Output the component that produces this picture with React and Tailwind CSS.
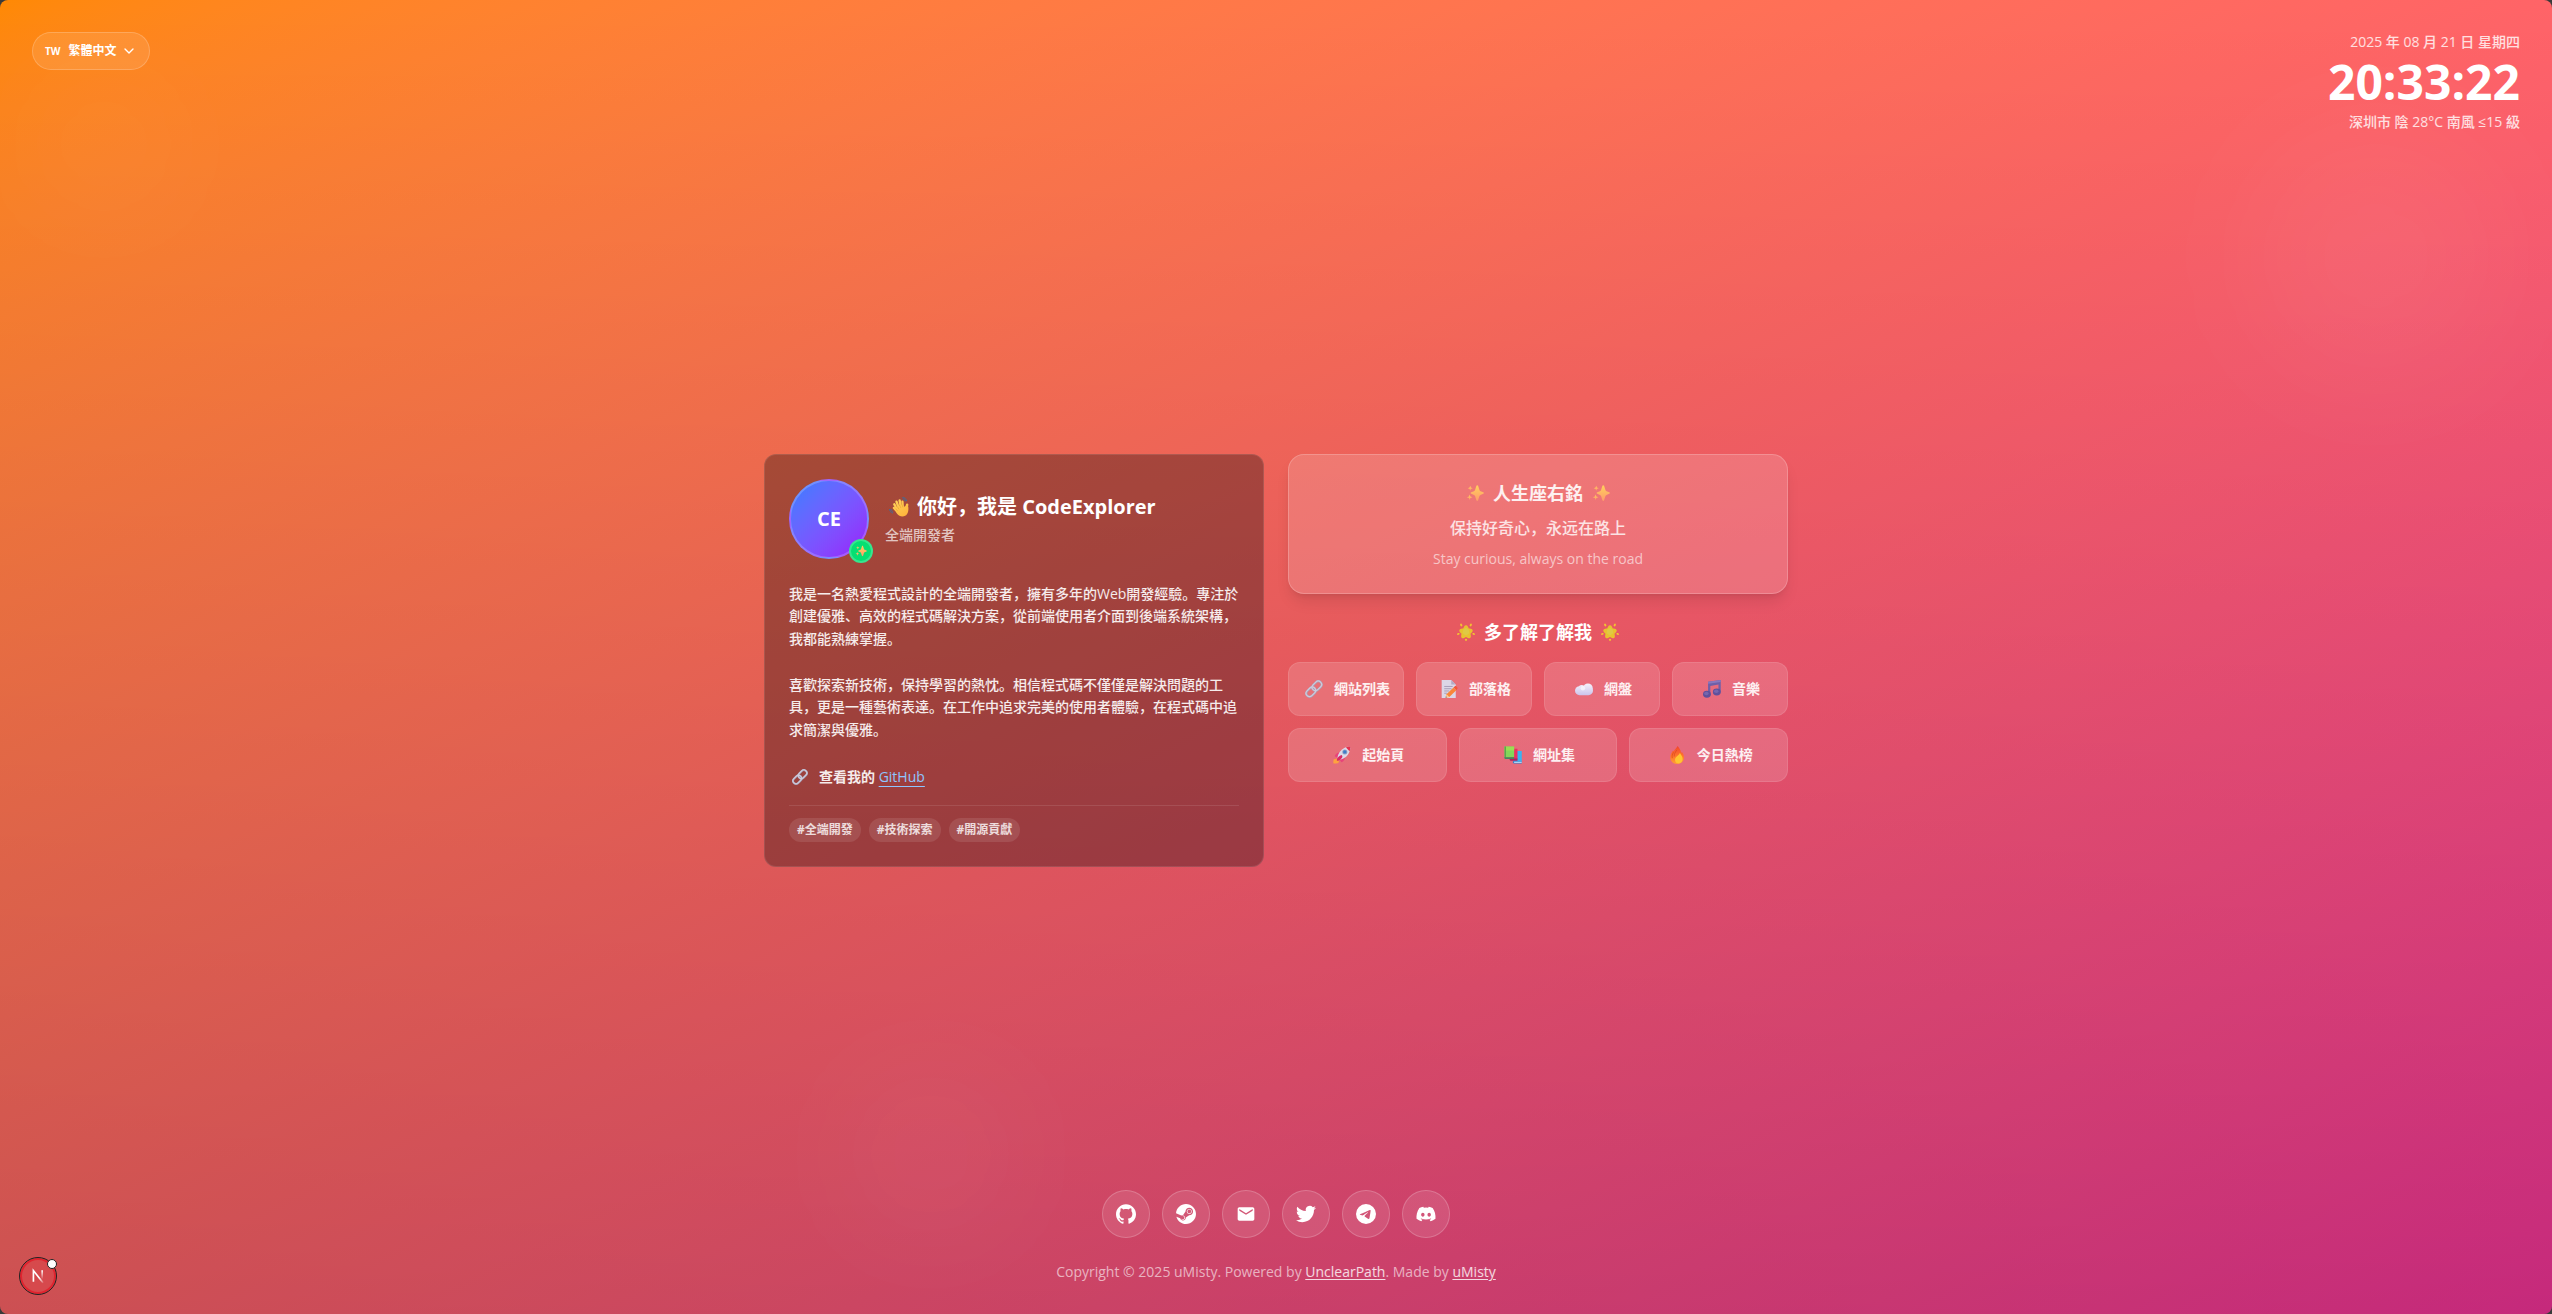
import React, { useId } from "react";
import { SiGithub, SiSteam, SiTelegram } from "react-icons/si";
import { MdEmail } from "react-icons/md";
import { ChevronDown } from "lucide-react";

const Emoji = ({ size = "size-[18px]", children }) => (
  <svg viewBox="0 0 32 32" className={`${size} shrink-0`} aria-hidden="true">
    {children}
  </svg>
);

function Sparkles({ size }) {
  const id = useId();
  return (
    <Emoji size={size}>
      <defs>
        <linearGradient id={id} x1="0" y1="0" x2="0" y2="1">
          <stop offset="0" stopColor="#ffd15c" />
          <stop offset="1" stopColor="#ff9a6b" />
        </linearGradient>
      </defs>
      <g fill={`url(#${id})`}>
        <path d="M18.5 3.2c.6-1.6 2.4-1.6 3 0l2.4 7.6c.3.9 1 1.6 1.9 1.9l4.8 1.8c1.5.6 1.5 2.4 0 3l-4.8 1.9c-.9.3-1.6 1-1.9 1.9l-2.4 7.6c-.6 1.6-2.4 1.6-3 0l-2.4-7.6c-.3-.9-1-1.6-1.9-1.9l-4.8-1.9c-1.5-.6-1.5-2.4 0-3l4.8-1.8c.9-.3 1.6-1 1.9-1.9z" />
        <path d="M6.5 18.5l1.3 3.7 3.7 1.3-3.7 1.3-1.3 3.7-1.3-3.7L1.500 23.500l3.700-1.300z" />
        <path d="M7.500 3l1.200 3.300L12 7.500 8.700 8.700 7.500 12 6.300 8.700 3 7.500l3.300-1.200z" />
      </g>
    </Emoji>
  );
}

function Wave() {
  const id = useId();
  return (
    <Emoji size="size-5">
      <defs>
        <linearGradient id={id} gradientUnits="userSpaceOnUse" x1="8" y1="6" x2="26" y2="30">
          <stop offset="0" stopColor="#ffd25a" />
          <stop offset="1" stopColor="#ffb43c" />
        </linearGradient>
      </defs>
      <g fill="none" stroke={`url(#${id})`} strokeLinecap="round">
        <path d="M12 18.500L8.500 11.500" strokeWidth="3.800" />
        <path d="M15 16L12 7.500" strokeWidth="3.800" />
        <path d="M18.500 14.500L17 5.500" strokeWidth="3.800" />
        <path d="M22 14L21.500 7.500" strokeWidth="3.600" />
        <path d="M13 23L8 17.500" strokeWidth="3.800" />
        <path d="M27 20L29 12.500" strokeWidth="4" />
      </g>
      <path
        d="M10.500 18c-.6 6 3.500 13 11 13 7 0 9-5 9.500-10.500.2-3.500 0-6-2-8l-4 3-4.500-3.500z"
        fill={`url(#${id})`}
      />
      <g fill="none" stroke="#e39a2e" strokeWidth=".8" strokeLinecap="round">
        <path d="M13.500 15.500l2 3.500M17 13l1.800 4M21 12.500l1 3.500M11 19l2.500 3" />
      </g>
      <g fill="none" stroke="#3d6f9e" strokeWidth="1.6" strokeLinecap="round">
        <path d="M22 1c3.500 0 5.500 2 6 5M22.500 3.500c2 .2 3 1.200 3.200 3M1 20c.5 3 2 4.800 4.500 5.500M3.500 20c.3 1.800 1.200 2.800 2.500 3.300" />
      </g>
    </Emoji>
  );
}

function LinkEmoji({ size }) {
  return (
    <Emoji size={size}>
      <g transform="rotate(-45 16 16)" fill="none">
        <rect x="-1" y="10" width="19" height="12" rx="6" stroke="#a9a2b8" strokeWidth="4" />
        <rect x="14" y="10" width="19" height="12" rx="6" stroke="#a9a2b8" strokeWidth="4" />
        <rect x="-1" y="9.6" width="19" height="12" rx="6" stroke="#cfcadb" strokeWidth="2.2" />
        <rect x="14" y="9.6" width="19" height="12" rx="6" stroke="#cfcadb" strokeWidth="2.2" />
      </g>
    </Emoji>
  );
}

function Star() {
  return (
    <Emoji>
      <path
        d="M16 5.500c.9 0 1.500.5 1.900 1.300l2 4.100 4.600.7c2 .3 2.600 2.300 1.200 3.700l-3.300 3.300.8 4.600c.3 2-1.400 3.100-3.100 2.300L16 23.300l-4.100 2.200c-1.700.8-3.400-.3-3.100-2.300l.8-4.600-3.300-3.300c-1.400-1.400-.8-3.400 1.200-3.700l4.600-.7 2-4.100c.4-.8 1-1.300 1.900-1.300z"
        fill="#e9c12f"
        stroke="#e9c12f"
        strokeWidth="3"
        strokeLinejoin="round"
      />
      <path d="M11 12l5-4 5 4 1 6-6 4-6-4z" fill="#e0c944" />
      <g fill="#f2c232">
        <ellipse cx="7.500" cy="3.500" rx="1.800" ry="2.600" transform="rotate(-30 7.500 3.500)" />
        <ellipse cx="24.500" cy="3.500" rx="1.800" ry="2.600" transform="rotate(30 24.500 3.500)" />
        <ellipse cx="2.500" cy="19.500" rx="2.400" ry="1.700" transform="rotate(-20 2.500 19.500)" />
        <ellipse cx="29.500" cy="19.500" rx="2.400" ry="1.700" transform="rotate(20 29.500 19.500)" />
        <ellipse cx="16" cy="29.800" rx="2" ry="2" />
      </g>
    </Emoji>
  );
}

function Memo() {
  return (
    <Emoji>
      <path d="M3 0h17l8 8v24H3z" fill="#dcd6e6" />
      <path d="M20 0l8 8h-8z" fill="#b3aac4" />
      <path d="M7.500 11.500h15M7.500 15.500h13M7.500 19.500h9M7.500 23.500h5" stroke="#9a91ad" strokeWidth="1.400" />
      <path d="M11.500 25.500L24 13.500l5 4.500-12.500 12-6 1.200z" fill="#f9873a" />
      <path d="M24 13.500l2-2c1-1 2.300-.8 3.200 0l1.300 1.300c1 1 1 2.300 0 3.200L29 18z" fill="#f4553a" />
      <path d="M11.500 25.500l5 4.500-6.500 1.500z" fill="#f8cf9a" />
      <path d="M10.500 29l1.800 1.700-2.500.8z" fill="#5b4a5c" />
    </Emoji>
  );
}

function Cloud() {
  const id = useId();
  return (
    <Emoji>
      <defs>
        <linearGradient id={id} gradientUnits="userSpaceOnUse" x1="0" y1="6" x2="0" y2="27">
          <stop offset="0" stopColor="#f6f3fb" />
          <stop offset="1" stopColor="#cbc4ec" />
        </linearGradient>
      </defs>
      <g fill={`url(#${id})`}>
        <rect x="0" y="11" width="32" height="16" rx="8" />
        <circle cx="23" cy="14.500" r="8.500" />
        <circle cx="12" cy="14.500" r="5.500" />
      </g>
      <circle cx="14" cy="14.500" r="4" fill="#ffffff" fillOpacity=".6" />
    </Emoji>
  );
}

function Music() {
  return (
    <Emoji>
      <path d="M9 3L31.500 0v22h-4V8L13 10.500V25H9z" fill="#6f5fa8" />
      <path d="M9 3L31.500 0v3.500L9 6.500z" fill="#8a78bd" />
      <ellipse cx="7" cy="25.500" rx="7" ry="6.200" fill="#5f509b" />
      <ellipse cx="24.500" cy="21.500" rx="7" ry="6.200" fill="#5f509b" />
      <ellipse cx="6" cy="24" rx="4" ry="3" fill="#7566ae" />
      <ellipse cx="23.500" cy="20" rx="4" ry="3" fill="#7566ae" />
    </Emoji>
  );
}

function Rocket() {
  return (
    <Emoji>
      <path d="M1 24l6-2 4 4-2 5c-2-1-3 1-8 0-1-2 0-5 0-7z" fill="#ffa23f" />
      <path d="M3 18c2-5 6-7 11-6l-4 10zM15 29c4-2 7-6 6-11l-10 5z" fill="#e8437a" />
      <path d="M8 21c1-9 8-18 20-20 2 0 3 1 3 3-2 12-10 19-19 20z" fill="#dcd9e8" />
      <path d="M23 2.700C25.500 1.700 27 1.200 28.500 1c2 0 2.500 1 2.500 2.500-.2 2-.8 4-1.700 5.700z" fill="#e5324f" />
      <circle cx="21" cy="10.500" r="4.500" fill="#8fa0c4" />
      <circle cx="21" cy="10.500" r="3" fill="#3e7cc9" />
      <path d="M7 26c-1-3 3-8 8-10 2 1 2 3 1 5-2 3-6 6-9 5z" fill="#d92a66" />
    </Emoji>
  );
}

function Books() {
  return (
    <Emoji>
      <path d="M15 9h16.500v20H17z" fill="#39b3f2" />
      <path d="M16 27h15.500v4H17.500c-2 0-2-4-1.500-4z" fill="#2f7fd0" />
      <path d="M18 28h13.500v1.800H18z" fill="#d7ecfa" />
      <path d="M10 5h14v19H12z" fill="#ea2f63" />
      <path d="M10 22h14v4H12c-2 0-2.500-4-2-4z" fill="#a72560" />
      <path d="M1 1h17v19H1z" fill="#83d65a" />
      <path d="M1 1h17v7H1z" fill="#9ade52" />
      <path d="M1 1h2.500v20H1z" fill="#57a84f" />
      <path d="M1 20h17v3H3c-3 0-2.500-3-2-3z" fill="#3f8a5c" />
    </Emoji>
  );
}

function Fire() {
  const id = useId();
  return (
    <Emoji>
      <defs>
        <linearGradient id={id} x1="0" y1="0" x2="0" y2="1">
          <stop offset="0" stopColor="#f2452f" />
          <stop offset=".6" stopColor="#ff7a2a" />
          <stop offset="1" stopColor="#ffa035" />
        </linearGradient>
      </defs>
      <path
        d="M17 0c-2 4-5 6-7 9.500-.5-.5-1-1-1-1.500C6 12 4 16 4 20.500 4.500 27.500 9.500 32 16 32s12.500-4.500 12.500-11.500c0-5-2-7.500-4-10.500 0 1-.5 2-1 2.500C23 7 20 4 17 0z"
        fill={`url(#${id})`}
      />
      <path
        d="M21 12c0 4-7.500 6-8.500 12-.5 4.500 3 7 6.500 7s7-3 7-8c0-5-3-7-5-11z"
        fill="#ffc531"
      />
      <path d="M9.500 12c-2 3-2.500 6-2 9M15 8c-2.500 4-4 6-4 10" fill="none" stroke="#d7431f" strokeWidth="1.200" strokeLinecap="round" />
    </Emoji>
  );
}

function TwitterIcon({ className }) {
  return (
    <svg viewBox="0 0 24 24" fill="currentColor" className={className} aria-hidden="true">
      <path d="M23.953 4.57a10 10 0 01-2.825.775 4.958 4.958 0 002.163-2.723c-.951.555-2.005.959-3.127 1.184a4.92 4.92 0 00-8.384 4.482C7.69 8.095 4.067 6.13 1.64 3.162a4.822 4.822 0 00-.666 2.475c0 1.71.87 3.213 2.188 4.096a4.904 4.904 0 01-2.228-.616v.06a4.923 4.923 0 003.946 4.827 4.996 4.996 0 01-2.212.085 4.936 4.936 0 004.604 3.417 9.867 9.867 0 01-6.102 2.105c-.39 0-.779-.023-1.17-.067a13.995 13.995 0 007.557 2.209c9.053 0 13.998-7.496 13.998-13.985 0-.21 0-.42-.015-.63A9.935 9.935 0 0024 4.59z" />
    </svg>
  );
}

function DiscordIcon({ className }) {
  return (
    <svg viewBox="1 1 22 22" fill="currentColor" className={className} aria-hidden="true">
      <path d="M19.27 5.33C17.94 4.71 16.5 4.26 15 4a.09.09 0 0 0-.07.03c-.18.33-.39.76-.53 1.09a16.09 16.09 0 0 0-4.8 0c-.14-.34-.35-.76-.54-1.09c-.01-.02-.04-.03-.07-.03c-1.5.26-2.93.71-4.27 1.33c-.01 0-.02.01-.03.02c-2.72 4.07-3.47 8.03-3.1 11.95c0 .02.01.04.03.05c1.8 1.32 3.53 2.12 5.24 2.65c.03.01.06 0 .07-.02c.4-.55.76-1.13 1.07-1.74c.02-.04 0-.08-.04-.09c-.57-.22-1.11-.48-1.64-.78c-.04-.02-.04-.08-.01-.11c.11-.08.22-.17.33-.25c.02-.02.05-.02.07-.01c3.44 1.57 7.15 1.57 10.55 0c.02-.01.05-.01.07.01c.11.09.22.17.33.26c.04.03.04.09-.01.11c-.52.31-1.07.56-1.64.78c-.04.01-.05.06-.04.09c.32.61.68 1.19 1.07 1.74c.03.01.06.02.09.01c1.72-.53 3.45-1.33 5.25-2.65c.02-.01.03-.03.03-.05c.44-4.53-.73-8.46-3.1-11.95c-.01-.01-.02-.02-.04-.02zM8.52 14.91c-1.03 0-1.89-.95-1.89-2.12s.84-2.12 1.89-2.12c1.06 0 1.9.96 1.89 2.12c0 1.17-.84 2.12-1.89 2.12zm6.97 0c-1.03 0-1.89-.95-1.89-2.12s.84-2.12 1.89-2.12c1.06 0 1.9.96 1.89 2.12c0 1.17-.83 2.12-1.89 2.12z" />
    </svg>
  );
}

const primaryLinks = [
  { label: "網站列表", icon: LinkEmoji },
  { label: "部落格", icon: Memo },
  { label: "網盤", icon: Cloud },
  { label: "音樂", icon: Music },
];

const secondaryLinks = [
  { label: "起始頁", icon: Rocket },
  { label: "網址集", icon: Books },
  { label: "今日熱榜", icon: Fire },
];

const socials = [
  { label: "GitHub", icon: SiGithub },
  { label: "Steam", icon: SiSteam },
  { label: "Email", icon: MdEmail },
  { label: "Twitter", icon: TwitterIcon },
  { label: "Telegram", icon: SiTelegram },
  { label: "Discord", icon: DiscordIcon },
];

const tags = ["#全端開發", "#技術探索", "#開源貢獻"];

function LinkTile({ label, icon: Icon }) {
  return (
    <a
      href="#"
      className="flex items-center justify-center gap-2 rounded-xl border border-white/10 bg-white/15 py-4 text-sm font-bold text-white/90"
    >
      <span className="flex w-6 justify-center">
        <Icon />
      </span>
      {label}
    </a>
  );
}

function LanguagePicker() {
  return (
    <label className="flex h-[38px] items-center gap-2 rounded-full border border-white/20 bg-white/10 px-3 text-white">
      <span className="text-[10px] font-bold">TW</span>
      <span className="flex items-center gap-1">
        <select
          aria-label="語言"
          defaultValue="zh-TW"
          className="appearance-none bg-transparent text-xs font-bold outline-none"
        >
          <option value="zh-TW">繁體中文</option>
        </select>
        <ChevronDown className="size-4" aria-hidden="true" />
      </span>
    </label>
  );
}

function Clock() {
  return (
    <div className="flex flex-col items-end text-right">
      <p className="text-sm font-medium text-white/80">2025 年 08 月 21 日 星期四</p>
      <p className="my-1.5 text-5xl leading-none font-bold">20:33:22</p>
      <p className="text-sm font-medium text-white/80">深圳市 陰 28°C 南風 ≤15 級</p>
    </div>
  );
}

function ProfileCard() {
  return (
    <section className="rounded-xl border border-white/10 bg-black/30 p-6">
      <div className="flex items-center gap-4">
        <div className="relative shrink-0">
          <div className="flex size-20 items-center justify-center rounded-full border-2 border-white/20 bg-linear-to-br from-blue-500 to-purple-600 text-xl font-bold">
            CE
          </div>
          <span className="absolute -right-1 -bottom-1 flex size-6 items-center justify-center rounded-full border-2 border-white/20 bg-green-400">
            <Sparkles size="size-3" />
          </span>
        </div>
        <div>
          <h1 className="mb-1 flex items-center gap-2 text-xl font-bold">
            <span className="flex w-6 justify-end">
              <Wave />
            </span>
            你好，我是 CodeExplorer
          </h1>
          <p className="text-sm font-medium text-white/70">全端開發者</p>
        </div>
      </div>
      <p className="mt-6 text-sm leading-relaxed font-medium whitespace-pre-line text-white/90">
        {"我是一名熱愛程式設計的全端開發者，擁有多年的Web開發經驗。專注於創建優雅、高效的程式碼解決方案，從前端使用者介面到後端系統架構，我都能熟練掌握。\n\n喜歡探索新技術，保持學習的熱忱。相信程式碼不僅僅是解決問題的工具，更是一種藝術表達。在工作中追求完美的使用者體驗，在程式碼中追求簡潔與優雅。"}
      </p>
      <p className="mt-6 mb-4 flex items-center text-sm leading-relaxed font-bold text-white/90">
        <span className="mr-2 flex w-[22px] justify-center">
          <LinkEmoji size="size-4" />
        </span>
        <span>
          查看我的{" "}
          <a href="#" className="font-normal text-blue-300 underline underline-offset-4">
            GitHub
          </a>
        </span>
      </p>
      <ul className="flex gap-2 border-t border-white/10 pt-3">
        {tags.map((tag) => (
          <li key={tag} className="rounded-full bg-white/10 px-2 py-1 text-xs font-bold text-white/80">
            {tag}
          </li>
        ))}
      </ul>
    </section>
  );
}

function MottoCard() {
  return (
    <section className="rounded-2xl border border-white/20 bg-white/15 p-6 text-center shadow-lg">
      <h2 className="mb-2 flex items-center justify-center gap-2 text-lg font-bold text-white/90">
        <span className="flex w-5 justify-center">
          <Sparkles />
        </span>
        人生座右銘
        <span className="flex w-5 justify-center">
          <Sparkles />
        </span>
      </h2>
      <p className="text-base leading-relaxed font-medium text-white/80">保持好奇心，永远在路上</p>
      <p className="mt-2 text-sm text-white/60">Stay curious, always on the road</p>
    </section>
  );
}

export default function App() {
  return (
    <div className="bg-[#3a3a3a] font-['Open_Sans','Noto_Sans_CJK_SC',sans-serif] text-white">
      <div className="relative overflow-hidden rounded-lg bg-linear-to-br from-orange-400 via-red-400 to-pink-500">
        <div className="absolute inset-0 bg-linear-to-b from-transparent to-black/20" />
        <div className="absolute top-20 left-10 size-32 rounded-full bg-white/5 blur-3xl" />
        <div className="absolute top-32 right-12 size-64 rounded-full bg-white/5 blur-3xl" />
        <div className="absolute bottom-20 left-1/3 size-40 rounded-full bg-white/5 blur-3xl" />

        <div className="relative flex min-h-screen flex-col">
          <header className="flex items-start justify-between px-8 pt-8 pb-1.5">
            <LanguagePicker />
            <Clock />
          </header>

          <main className="mx-auto grid w-full max-w-5xl flex-1 grid-cols-2 content-center items-start gap-6">
            <ProfileCard />
            <div className="flex flex-col">
              <MottoCard />
              <h2 className="mt-6 mb-4 flex items-center justify-center gap-2 text-lg font-bold">
                <span className="flex w-5 justify-center">
                  <Star />
                </span>
                多了解了解我
                <span className="flex w-5 justify-center">
                  <Star />
                </span>
              </h2>
              <nav className="flex flex-col gap-3">
                <div className="grid grid-cols-4 gap-3">
                  {primaryLinks.map((link) => (
                    <LinkTile key={link.label} {...link} />
                  ))}
                </div>
                <div className="grid grid-cols-3 gap-3">
                  {secondaryLinks.map((link) => (
                    <LinkTile key={link.label} {...link} />
                  ))}
                </div>
              </nav>
            </div>
          </main>

          <footer className="flex flex-col items-center gap-6 pt-2 pb-8">
            <div className="flex gap-3">
              {socials.map(({ label, icon: Icon }) => (
                <a
                  key={label}
                  href="#"
                  aria-label={label}
                  className="flex size-12 items-center justify-center rounded-full border border-white/20 bg-white/10"
                >
                  <Icon className="size-5" />
                </a>
              ))}
            </div>
            <p className="text-sm text-white/60">
              Copyright © 2025 uMisty. Powered by{" "}
              <a href="#" className="text-white/80 underline underline-offset-2">
                UnclearPath
              </a>
              . Made by{" "}
              <a href="#" className="text-white/80 underline underline-offset-2">
                uMisty
              </a>
            </p>
          </footer>
        </div>

        <button
          type="button"
          aria-label="Open Next.js Dev Tools"
          className="absolute bottom-5 left-5 flex size-9 items-center justify-center rounded-full border-2 border-[#e0242f] bg-red-500/20 outline-1 outline-[#222]"
        >
          <svg viewBox="0 0 24 24" className="size-5" fill="none" aria-hidden="true">
            <defs>
              <linearGradient id="next-diag" x1="14" y1="14" x2="18" y2="20" gradientUnits="userSpaceOnUse">
                <stop stopColor="#fff" />
                <stop offset="1" stopColor="#fff" stopOpacity=".2" />
              </linearGradient>
              <linearGradient id="next-stem" x1="17" y1="5" x2="17" y2="16" gradientUnits="userSpaceOnUse">
                <stop stopColor="#fff" />
                <stop offset="1" stopColor="#fff" stopOpacity="0" />
              </linearGradient>
            </defs>
            <path d="M6.500 19V5.500L18 20" stroke="url(#next-diag)" strokeWidth="2" />
            <path d="M17 5v11" stroke="url(#next-stem)" strokeWidth="2" />
          </svg>
          <span className="absolute -top-px -right-[3px] size-[10px] rounded-full border border-[#222] bg-white" />
        </button>
      </div>
    </div>
  );
}
